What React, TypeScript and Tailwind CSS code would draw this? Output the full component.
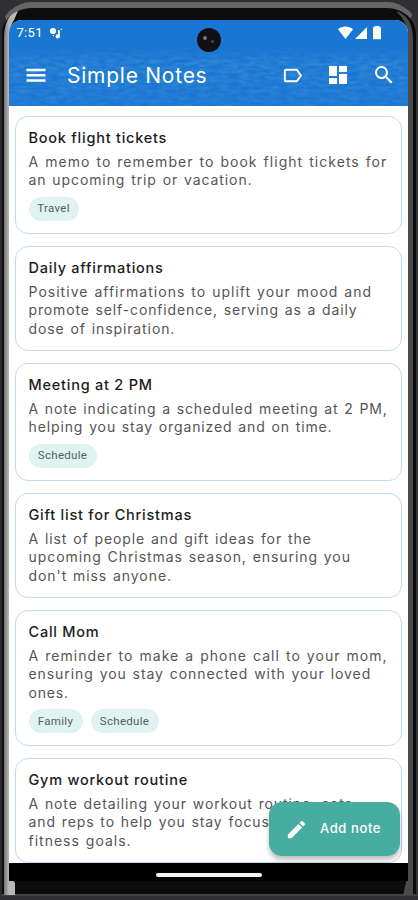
import type { ReactNode } from 'react';
import { MdDashboard, MdEdit, MdOutlineLabel, MdSearch } from 'react-icons/md';

interface Styled {
  text: string;
  className: string;
}

interface Note {
  title: string;
  lines: Styled[];
  tags?: Styled[];
  className: string;
}

const NOTES: Note[] = [
  {
    title: 'Book flight tickets',
    lines: [
      { text: 'A memo to remember to book flight tickets for', className: 'tracking-[1.04px]' },
      { text: 'an upcoming trip or vacation.', className: 'tracking-[0.91px]' },
    ],
    tags: [{ text: 'Travel', className: 'w-[50px]' }],
    className: 'h-[118px]',
  },
  {
    title: 'Daily affirmations',
    lines: [
      { text: 'Positive affirmations to uplift your mood and', className: 'tracking-[1.02px]' },
      { text: 'promote self-confidence, serving as a daily', className: 'tracking-[0.86px]' },
      { text: 'dose of inspiration.', className: 'tracking-[0.9px]' },
    ],
    className: 'h-[105px]',
  },
  {
    title: 'Meeting at 2 PM',
    lines: [
      { text: 'A note indicating a scheduled meeting at 2 PM,', className: 'tracking-[0.86px]' },
      { text: 'helping you stay organized and on time.', className: 'tracking-[0.88px]' },
    ],
    tags: [{ text: 'Schedule', className: 'w-[68px]' }],
    className: 'h-[118px]',
  },
  {
    title: 'Gift list for Christmas',
    lines: [
      { text: 'A list of people and gift ideas for the', className: 'tracking-[0.91px]' },
      { text: 'upcoming Christmas season, ensuring you', className: 'tracking-[0.93px]' },
      { text: "don't miss anyone.", className: 'tracking-[0.93px]' },
    ],
    className: 'h-[105px]',
  },
  {
    title: 'Call Mom',
    lines: [
      { text: 'A reminder to make a phone call to your mom,', className: 'tracking-[1.04px]' },
      { text: 'ensuring you stay connected with your loved', className: 'tracking-[0.93px]' },
      { text: 'ones.', className: 'tracking-[0.8px]' },
    ],
    tags: [
      { text: 'Family', className: 'w-[54px]' },
      { text: 'Schedule', className: 'w-[68px]' },
    ],
    className: 'h-[136px]',
  },
  {
    title: 'Gym workout routine',
    lines: [
      { text: 'A note detailing your workout routine, sets,', className: 'tracking-[0.9px]' },
      { text: 'and reps to help you stay focused', className: 'tracking-[0.9px]' },
      { text: 'fitness goals.', className: 'tracking-[1px]' },
    ],
    className: 'h-[105px]',
  },
];

function NoteCard({ note }: { note: Note }) {
  return (
    <article className={`shrink-0 rounded-[13px] border-[1.5px] border-[#bfd9f6] px-[12.5px] pt-[11px] ${note.className}`}>
      <h2 className="text-[14.5px] leading-5 font-[450] tracking-[0.76px] whitespace-nowrap text-[#1c1c1c]">{note.title}</h2>
      <p className="mt-[5px] text-[14px] leading-[18.3px] [word-spacing:1px] text-[#555]">
        {note.lines.map((line) => (
          <span key={line.text} className={`block whitespace-nowrap ${line.className}`}>
            {line.text}
          </span>
        ))}
      </p>
      {note.tags && (
        <div className="mt-[7px] flex gap-2">
          {note.tags.map((tag) => (
            <span
              key={tag.text}
              className={`flex h-6 items-center justify-center rounded-full bg-[#e1f3f1] pt-px font-[Roboto,sans-serif] text-[11.5px] tracking-[0.3px] text-[#53605e] ${tag.className}`}
            >
              {tag.text}
            </span>
          ))}
        </div>
      )}
    </article>
  );
}

function IconButton({ label, children }: { label: string; children: ReactNode }) {
  return (
    <button aria-label={label} className="flex size-6 items-center justify-center">
      {children}
    </button>
  );
}

/** Rippled water behind the toolbar. */
function Water() {
  return (
    <svg className="absolute inset-0 size-full" aria-hidden="true">
      <defs>
        <filter id="ripples" x="0" y="0" width="100%" height="100%">
          <feTurbulence type="fractalNoise" baseFrequency="0.1 0.3" numOctaves="4" seed="8" />
          <feColorMatrix values="0 0 0 0 0.3  0 0 0 0 0.6  0 0 0 0 0.78  1.1 0 0 0 -0.3" />
        </filter>
        <linearGradient id="fade" x1="0" y1="0" x2="0" y2="1">
          <stop offset="0.3" stopColor="#000" />
          <stop offset="0.5" stopColor="#fff" />
          <stop offset="1" stopColor="#999" />
        </linearGradient>
        <mask id="water">
          <rect width="100%" height="100%" fill="url(#fade)" />
        </mask>
      </defs>
      <rect width="100%" height="100%" filter="url(#ripples)" mask="url(#water)" opacity="0.4" />
    </svg>
  );
}

function StatusBar() {
  return (
    <div className="relative flex h-[26px] items-center pr-[26px] pl-[7.5px] font-[Roboto,sans-serif] text-[13px] tracking-[0.3px]">
      7:51
      <svg className="ml-[6px]" width="14" height="14" viewBox="0 0 14 14" fill="currentColor" aria-hidden="true">
        <circle cx="4" cy="5" r="3.1" />
        <circle cx="8.7" cy="10.4" r="2.1" />
        <path d="M9 5h1.8v5.4H9z" />
        <circle cx="9.7" cy="5" r="1" />
        <circle cx="12.3" cy="3.2" r=".8" />
        <circle cx="4.4" cy="9.5" r=".7" />
      </svg>
      <svg className="ml-auto" width="44" height="14" viewBox="0 0 44 14" fill="currentColor" aria-hidden="true">
        <path d="M0 3.3C4.2-.3 10.8-.3 15 3.3L7.5 13z" />
        <path d="M17 13 29 1v12z" />
        <path d="M37.500 0h4v1.300h1.500v12h-8v-12h1.500V0z" />
      </svg>
    </div>
  );
}

export default function App() {
  return (
    <div className="h-[900px] w-[418px] overflow-hidden bg-[#302f31] font-[Inter,sans-serif]">
      <div className="relative h-full">
        {/* Phone body */}
        <div className="absolute -right-px top-[2px] left-0 h-[894px] rounded-t-[32px] border-t-[6px] border-r-[3px] border-b-2 border-l-2 border-t-[#656565] border-r-[#333] border-b-[#414045] border-l-[#2a2a2a] bg-[#0c0c0c]" />
        <svg className="absolute inset-0" width="418" height="900" aria-hidden="true">
          <defs>
            <linearGradient id="rail" x1="4" x2="9" y1="0" y2="0" gradientUnits="userSpaceOnUse">
              <stop stopColor="#747474" />
              <stop offset="1" stopColor="#b8b8b8" />
            </linearGradient>
          </defs>
          <path d="M4 895V38Q4 16 18 11L14 20Q9 27 9 38V874L15 883V895z" fill="url(#rail)" />
          <path d="M396 11Q413 16 413 40V895H403L408 874V36Q408 22 396 11z" fill="#4b4b4b" />
        </svg>
        <div className="relative pt-5 pr-[10px] pl-[9px]">
          <main className="relative flex h-[843px] flex-col overflow-hidden rounded-t-[13px] bg-white">
            <header className="relative h-[86px] shrink-0 bg-[#1976d2] text-white">
              <Water />
              <StatusBar />
              <div className="relative flex h-[60px] items-center pr-[12px] pb-[2px] pl-[15px]">
                <IconButton label="Menu">
                  <svg className="shrink-0" width="24" height="24" viewBox="0 0 24 24" fill="none" stroke="currentColor" strokeWidth="2.5">
                    <path d="M2.500 7H21.500M2.500 12.300H21.500M2.500 17.600H21.500" />
                  </svg>
                </IconButton>
                <h1 className="mt-[2px] ml-[19px] grow text-[21px] font-normal tracking-[0.75px]">Simple Notes</h1>
                <div className="flex gap-[22px]">
                  <IconButton label="Labels">
                    <MdOutlineLabel size={23} />
                  </IconButton>
                  <IconButton label="Layout">
                    <MdDashboard size={24} />
                  </IconButton>
                  <IconButton label="Search">
                    <MdSearch size={24} />
                  </IconButton>
                </div>
              </div>
            </header>
            <section className="flex flex-col gap-3 px-1.5 pt-[10px]">
              {NOTES.map((note) => (
                <NoteCard key={note.title} note={note} />
              ))}
            </section>
            <button className="absolute right-2 bottom-[7px] flex h-[54px] w-[131px] items-center rounded-[13px] bg-[#48ada1] pl-4 text-[13px] font-[450] tracking-[0.6px] text-white shadow-[0_4px_5px_rgba(0,0,0,0.25)]">
              <MdEdit size={23} />
              <span className="ml-3">Add note</span>
            </button>
          </main>
          {/* System navigation */}
          <nav className="flex h-[18px] items-start justify-center bg-black pt-[10px]">
            <span className="h-1 w-[106px] rounded-full bg-[#f2f2f2]" />
          </nav>
        </div>
        {/* Front camera */}
        <div className="absolute top-[28px] left-[197px] size-6 rounded-full bg-[#101014]">
          <span className="absolute top-[8px] left-[6px] size-1 rounded-full bg-[#77777c]" />
          <span className="absolute top-[12px] left-[14px] size-[3px] rounded-full bg-[#44446a]" />
        </div>
      </div>
    </div>
  );
}
